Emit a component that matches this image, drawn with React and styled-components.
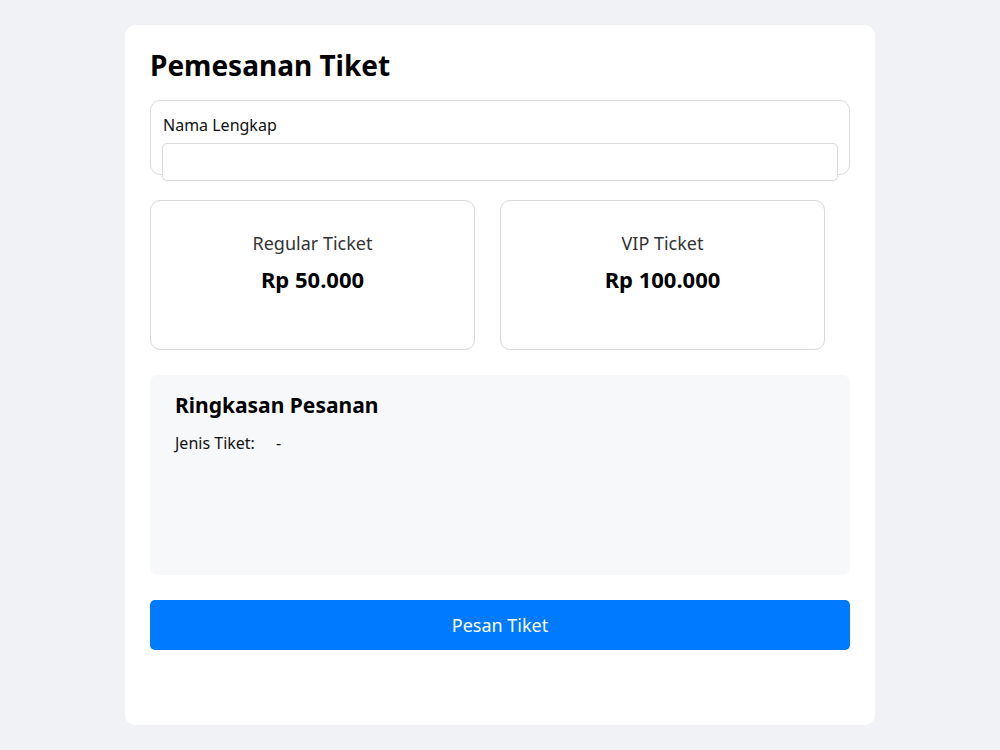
import React, { useState } from 'react'
import styled, { createGlobalStyle } from 'styled-components'

const GlobalStyle = createGlobalStyle`
  body {
    margin: 0;
    background: #f0f2f5;
    font-family: "Noto Sans", "Open Sans", sans-serif;
    color: #111;
  }
`

const tickets = [
  { id: 'regular', name: 'Regular Ticket', price: 'Rp 50.000' },
  { id: 'vip', name: 'VIP Ticket', price: 'Rp 100.000' },
]

const App = () => {
  const [nama, setNama] = useState('')
  const [picked, setPicked] = useState(null)
  const ticket = tickets.find(t => t.id === picked)

  return (
    <>
      <GlobalStyle />
      <Page>
        <Card>
          <Title>Pemesanan Tiket</Title>
          <FieldBox>
            <Label htmlFor='nama'>Nama Lengkap</Label>
            <Input id='nama' type='text' value={nama} onChange={e => setNama(e.target.value)} />
          </FieldBox>
          <TicketGrid>
            {tickets.map(t => (
              <TicketCard key={t.id} $active={picked === t.id} onClick={() => setPicked(t.id)}>
                <TicketName>{t.name}</TicketName>
                <TicketPrice>{t.price}</TicketPrice>
              </TicketCard>
            ))}
          </TicketGrid>
          <Summary>
            <SummaryTitle>Ringkasan Pesanan</SummaryTitle>
            <SummaryRow>
              <span>Jenis Tiket:</span>
              <span>{ticket ? ticket.name : '-'}</span>
            </SummaryRow>
          </Summary>
          <Button type='button'>Pesan Tiket</Button>
        </Card>
      </Page>
    </>
  )
}

const Page = styled.div`
    display: flex;
    justify-content: center;
    padding: 25px 0;
`

const Card = styled.div`
    width: 750px;
    height: 700px;
    box-sizing: border-box;
    padding: 25px;
    background: #fff;
    border-radius: 10px;
`

const Title = styled.h1`
    margin: 0 0 19px;
    font-size: 28px;
    line-height: 1.1;
    font-weight: 700;
    color: #000;
`

const FieldBox = styled.div`
    height: 75px;
    box-sizing: border-box;
    padding: 12px 11px;
    border: 1px solid #dedede;
    border-radius: 10px;
`

const Label = styled.label`
    display: block;
    font-size: 16px;
    line-height: 24px;
    margin: 0 0 6px 1px;
`

const Input = styled.input`
    display: block;
    width: 100%;
    height: 38px;
    box-sizing: border-box;
    border: 1px solid #dcdcdc;
    border-radius: 5px;
    font: inherit;
    padding: 0 10px;
    outline: none;
`

const TicketGrid = styled.div`
    display: grid;
    grid-template-columns: 325px 325px;
    gap: 25px;
    margin-top: 25px;
`

const TicketCard = styled.div`
    height: 150px;
    box-sizing: border-box;
    padding-top: 28px;
    text-align: center;
    border: 1.5px solid ${p => (p.$active ? '#007bff' : '#dadada')};
    border-radius: 10px;
    cursor: pointer;
`

const TicketName = styled.div`
    font-size: 18px;
    line-height: 28px;
    color: #333;
`

const TicketPrice = styled.div`
    margin-top: 7px;
    font-size: 22px;
    line-height: 30px;
    font-weight: 700;
    color: #000;
`

const Summary = styled.div`
    height: 200px;
    box-sizing: border-box;
    margin-top: 25px;
    padding: 14px 25px;
    background: #f7f8fa;
    border-radius: 8px;
`

const SummaryTitle = styled.h3`
    margin: 0 0 10px;
    font-size: 21px;
    line-height: 32px;
    font-weight: 700;
    color: #000;
`

const SummaryRow = styled.div`
    display: flex;
    gap: 21px;
    font-size: 16px;
    line-height: 24px;
`

const Button = styled.button`
    all: unset;
    display: block;
    width: 100%;
    height: 50px;
    margin-top: 25px;
    box-sizing: border-box;
    text-align: center;
    font-size: 18px;
    color: #fff;
    background: #007bff;
    border-radius: 5px;
    cursor: pointer;
`

export default App
